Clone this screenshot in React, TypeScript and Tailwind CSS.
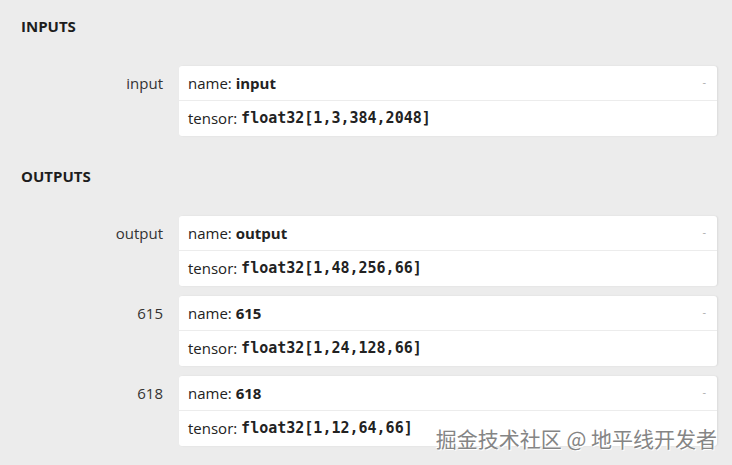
import type { ReactNode } from "react";

type Port = {
  label: string;
  name: string;
  tensor: string;
};

const INPUTS: Port[] = [{ label: "input", name: "input", tensor: "float32[1,3,384,2048]" }];

const OUTPUTS: Port[] = [
  { label: "output", name: "output", tensor: "float32[1,48,256,66]" },
  { label: "615", name: "615", tensor: "float32[1,24,128,66]" },
  { label: "618", name: "618", tensor: "float32[1,12,64,66]" },
];

function Section({ title, children }: { title: string; children: ReactNode }) {
  return (
    <div>
      <h2 className="h-[52px] pl-[21px] pt-[16px] text-[15px] font-bold leading-[20px] text-[#1d1d1d]">{title}</h2>
      <div className="flex flex-col gap-[10px] pt-[14px]">{children}</div>
    </div>
  );
}

function PortRow({ port }: { port: Port }) {
  return (
    <div className="flex items-start">
      <div className="w-[163px] shrink-0 pt-[7px] text-right text-[15px] leading-[20px] text-[#333]">{port.label}</div>
      <div className="ml-[16px] w-[538px] rounded-[3px] bg-white shadow-[1px_0_2px_rgba(0,0,0,0.08)]">
        <div className="relative flex h-[35px] items-center border-b border-[#ececec] px-[9px] text-[15px] text-[#222]">
          <span>name:&nbsp;</span>
          <b className="font-bold">{port.name}</b>
          <span className="absolute right-[11px] top-[9px] text-[11px] leading-[14px] text-[#aaa]">-</span>
        </div>
        <div className="flex h-[35px] items-center px-[9px] text-[15px] text-[#222]">
          <span>tensor:&nbsp;</span>
          <code className="font-['DejaVu_Sans_Mono','Liberation_Mono',monospace] text-[15px] font-bold">{port.tensor}</code>
        </div>
      </div>
    </div>
  );
}

export default function App() {
  return (
    <div className="relative h-[465px] w-[732px] overflow-hidden bg-[#ececec] font-['Open_Sans','Noto_Sans',sans-serif]">
      <Section title="INPUTS">
        {INPUTS.map((p) => (
          <PortRow key={p.label} port={p} />
        ))}
      </Section>
      <div className="h-[14px]" />
      <Section title="OUTPUTS">
        {OUTPUTS.map((p) => (
          <PortRow key={p.label} port={p} />
        ))}
      </Section>
      <div className="absolute right-[15px] top-[423px] font-['Noto_Sans_CJK_SC',sans-serif] text-[21px] leading-[30px] text-[#858585] [text-shadow:1px_1px_0_#fff,-1px_-1px_0_#fff]">
        掘金技术社区 @ 地平线开发者
      </div>
    </div>
  );
}
